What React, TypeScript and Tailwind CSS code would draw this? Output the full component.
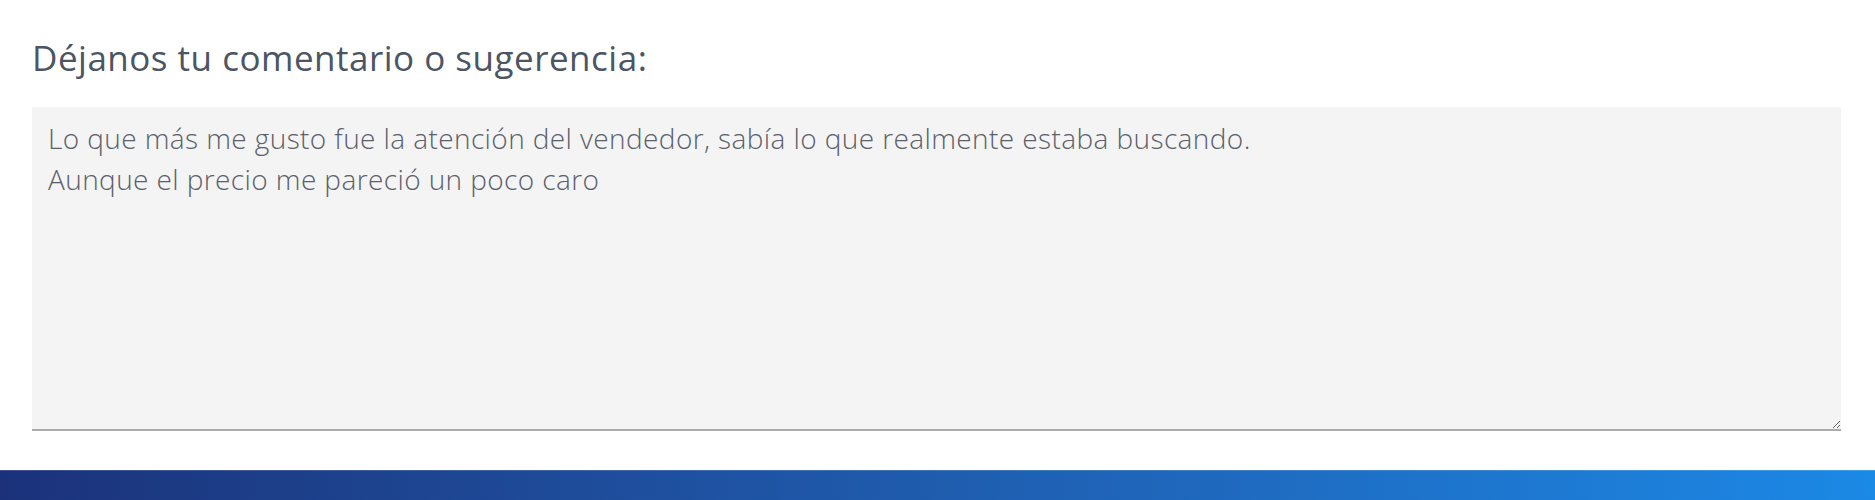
export default function App() {
  return (
    <div className="w-[1875px] h-[500px] bg-white flex flex-col overflow-hidden" style={{ fontFamily: '"Open Sans", "Noto Sans", sans-serif' }}>
      <div className="flex-1 pl-[32px] pr-[34px] pt-[34px]">
        <label htmlFor="comentario" className="block text-[35px] leading-[48px] text-[#4b5563] tracking-[0.5px]">
          Déjanos tu comentario o sugerencia:
        </label>
        <textarea
          id="comentario"
          className="mt-[25px] block w-full h-[324px] bg-[#f4f4f4] border-0 border-b-2 border-[#ababab] pl-[16px] pr-4 pt-[11px] text-[28px] leading-[41px] font-light tracking-[0.4px] text-[#5b606b] outline-none resize"
          defaultValue={
            'Lo que más me gusto fue la atención del vendedor, sabía lo que realmente estaba buscando.\nAunque el precio me pareció un poco caro'
          }
        />
      </div>
      <div className="h-[30px] bg-gradient-to-r from-[#1b327a] to-[#1b89e6] border-t border-white/15" />
    </div>
  );
}
